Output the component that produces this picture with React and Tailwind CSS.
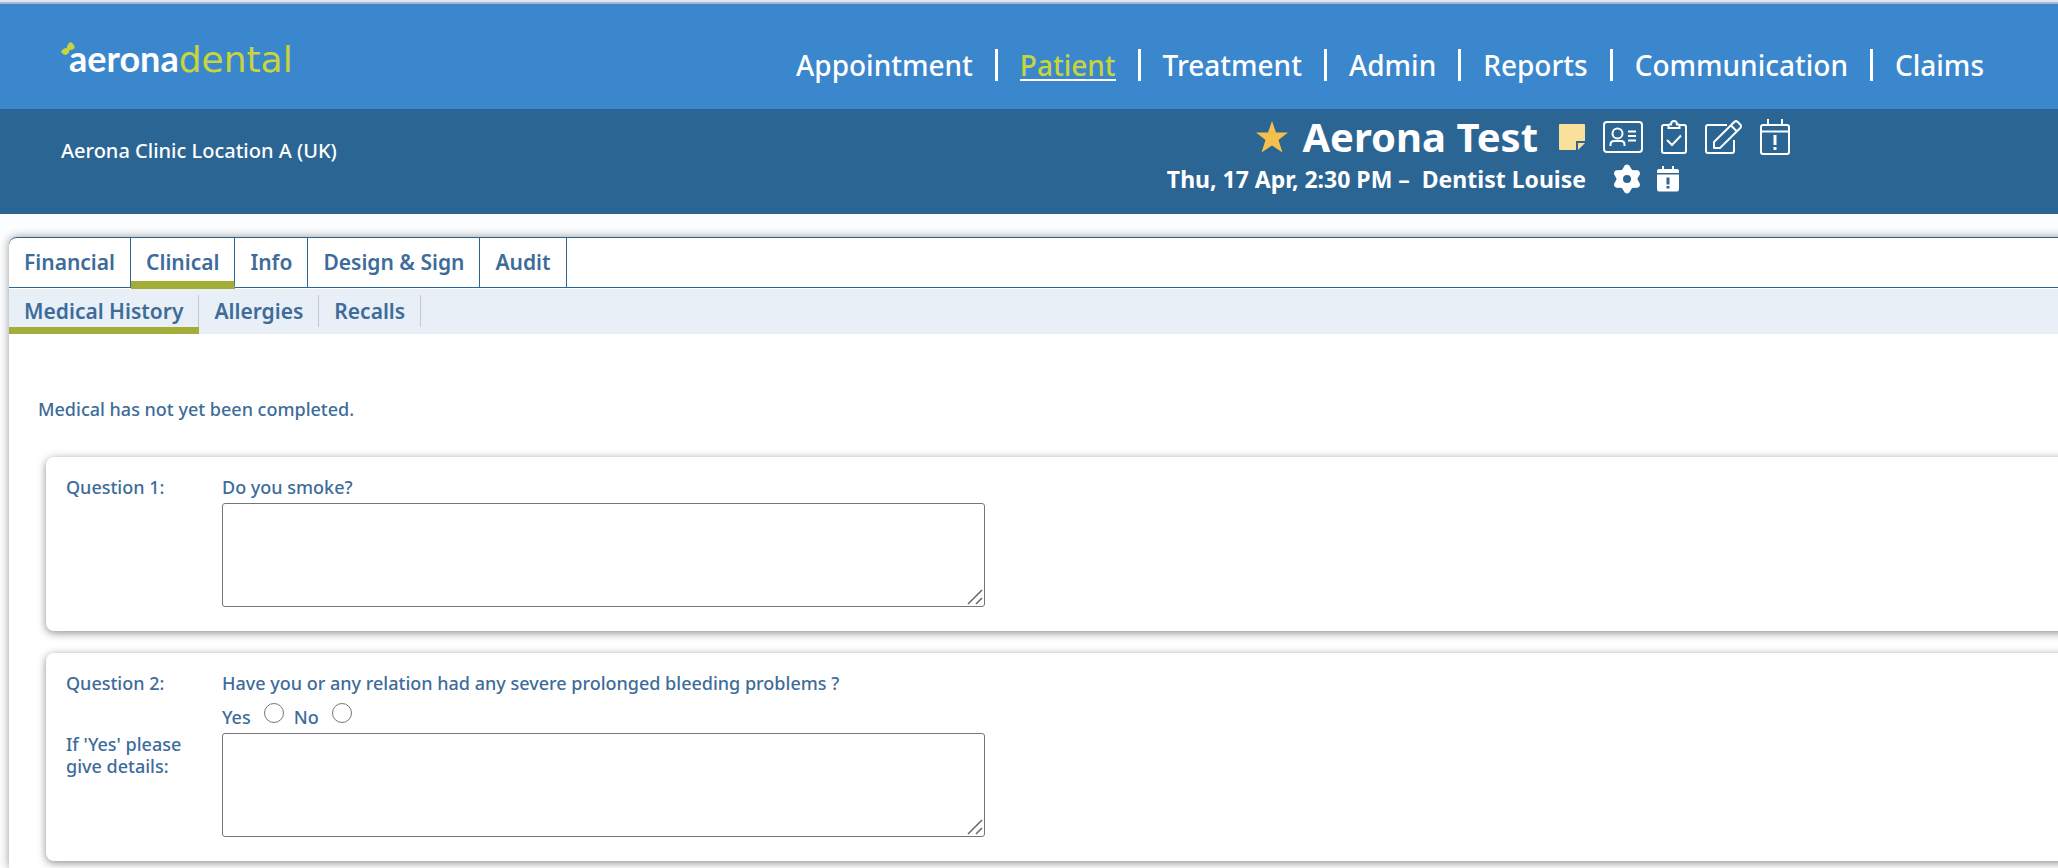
const navItems = ["Appointment", "Patient", "Treatment", "Admin", "Reports", "Communication", "Claims"];

const tabs = ["Financial", "Clinical", "Info", "Design & Sign", "Audit"];

const subTabs = ["Medical History", "Allergies", "Recalls"];

const Logo = () => (
    <a href="#" className="flex items-start leading-8">
        <svg width="14" height="14" viewBox="0 0 14 14" className="-mr-1.5" aria-hidden="true">
            <path fill="#c8d43c" d="M9.500 0C12.500 1.500 14 4 13.500 6C12.500 7.500 10.500 8 8.500 8C8.500 10.500 7 12.500 4.500 13C2.500 12.500.5 11 0 9.500C1.500 7 3.500 6 6 6C5.800 3.500 7.500 1 9.500 0Z" />
        </svg>
        <span className="flex items-baseline text-4xl">
            <span className="font-['Lato',sans-serif] leading-8 font-bold text-white">aerona</span>
            <span className="font-['DejaVu_Sans',sans-serif] leading-8 font-normal text-[#c8d43c]">dental</span>
        </span>
    </a>
);

const StarIcon = () => (
    <svg width="32" height="32" viewBox="0 0 32 32" aria-hidden="true">
        <path fill="#f4bf4a" d="M16 0L20 11.500H32L22.500 19L26.500 31.500L16 24.500L5.500 31.500L9.500 19L0 11.500H12Z" />
    </svg>
);

const NoteIcon = () => (
    <svg width="26" height="26" viewBox="0 0 26 26" aria-hidden="true">
        <path fill="#fae19b" d="M1 0H25Q26 0 26 1V17H17V26H1Q0 26 0 25V1Q0 0 1 0Z" />
        <path fill="#fae19b" d="M19 19H26L19 26Z" />
    </svg>
);

const IdCardIcon = () => (
    <svg width="40" height="32" viewBox="0 0 40 32" fill="none" stroke="white" strokeWidth="2" aria-hidden="true">
        <rect x="1" y="1" width="38" height="30" rx="3" />
        <circle cx="14.500" cy="12.500" r="5" />
        <path d="M7.500 25V23.500Q7.500 20 11 20H18Q21.500 20 21.500 23.500V25M25 10.500H33M25 15H33M25 19.500H33" />
    </svg>
);

const ClipboardIcon = () => (
    <svg width="26" height="34" viewBox="0 0 26 34" fill="none" stroke="white" strokeWidth="2" aria-hidden="true">
        <path d="M7 5H3Q1 5 1 7V31Q1 33 3 33H23Q25 33 25 31V7Q25 5 23 5H19" />
        <path d="M7.500 8V5.500Q7.500 4.500 8.500 4.500H10Q10 1 13 1T16 4.500H17.500Q18.500 4.500 18.500 5.500V8Z" />
        <path d="M6 20L11 25L20 15.500" />
    </svg>
);

const EditIcon = () => (
    <svg width="37" height="34" viewBox="0 0 37 34" fill="none" stroke="white" strokeWidth="2" strokeLinejoin="round" aria-hidden="true">
        <path d="M22 5H3Q1 5 1 7V31Q1 33 3 33H27Q29 33 29 31V20" />
        <path d="M9 28V22L29.500 1.800Q31 .5 32.500 1.800L35.500 4.800Q36.500 6.200 35.500 7.800L15 28Z M26 5.500L32 11.500" />
    </svg>
);

const CalendarIcon = () => (
    <svg width="30" height="36" viewBox="0 0 30 36" fill="none" stroke="white" strokeWidth="2" aria-hidden="true">
        <rect x="1" y="6" width="28" height="29" rx="2" />
        <path d="M8 0V6M22 0V6M1 12.500H29" />
        <path strokeWidth="3" d="M15 16V26M15 28V31" />
    </svg>
);

const GearIcon = () => (
    <svg width="30" height="30" viewBox="-15 -15 30 30" fill="white" aria-hidden="true">
        <circle r="7" fill="none" stroke="white" strokeWidth="6" />
        {[0, 60, 120, 180, 240, 300].map((angle) => (
            <path key={angle} transform={`rotate(${angle})`} d="M-6 -7.500L-2.300 -13.500Q0 -15.500 2.300 -13.500L6 -7.500Z" />
        ))}
    </svg>
);

const AlertIcon = () => (
    <svg width="22" height="26" viewBox="0 0 22 26" fill="white" aria-hidden="true">
        <path d="M5 0H7V3H15V0H17V3H20Q22 3 22 5V7H0V5Q0 3 2 3H5Z" />
        <path fillRule="evenodd" d="M0 8.500H22V23Q22 25.500 20 25.500H2Q0 25.500 0 23ZM9.500 11.500V18.500H12.500V11.500ZM9.500 20V22.500H12.500V20Z" />
    </svg>
);

const patientActions = [
    { label: "Notes", Icon: NoteIcon },
    { label: "Patient card", Icon: IdCardIcon },
    { label: "Checklist", Icon: ClipboardIcon },
    { label: "Edit", Icon: EditIcon },
    { label: "Calendar", Icon: CalendarIcon }
];

const AnswerBox = ({ id, label }) => (
    <div className="relative w-[763px] h-[104px]">
        <textarea
            id={id}
            aria-label={label}
            className="block w-full h-full resize-none rounded-[3px] border border-[#767676] bg-white p-1"
        />
        {/* Resize grip */}
        <svg width="16" height="16" viewBox="0 0 16 16" className="absolute right-0.5 bottom-0.5 pointer-events-none" aria-hidden="true">
            <path d="M1 15L15 1M9 15L15 9" stroke="#666" strokeWidth="1.500" />
        </svg>
    </div>
);

const Card = ({ children }) => (
    <section className="-mr-4 rounded-lg bg-white px-5 pt-4 pb-6 shadow-[0_2px_8px_rgba(0,0,0,0.45)]">
        {children}
    </section>
);

const App = () => {
    return (
        <div className="flex min-h-screen flex-col overflow-hidden bg-[#fcfdff] font-['Noto_Sans',sans-serif] text-lg font-medium text-[#3d6c9a]">
            <header className="text-white">
                <div className="h-1 border-b-2 border-[#a9b9c9] bg-[#dce8f5]" />
                <div className="flex h-[105px] justify-between bg-[#3b87ce] pl-[61px] pr-[74px]">
                    <div className="pt-[38px]">
                        <Logo />
                    </div>
                    <nav className="flex items-center pt-5 pb-1">
                        {navItems.map((item, index) => (
                            <div key={item} className="flex items-center">
                                {index > 0 && <span className="mx-[22px] h-8 w-[3px] bg-white" />}
                                <a
                                    href="#"
                                    className={
                                        item === "Patient"
                                            ? "mt-0.5 border-b-2 border-white text-[28px] leading-7 text-[#c8d43c]"
                                            : "mt-0.5 border-b-2 border-transparent text-[28px] leading-7"
                                    }
                                >
                                    {item}
                                </a>
                            </div>
                        ))}
                    </nav>
                </div>

                <div className="flex h-[105px] justify-between bg-[#2b6593] pl-[61px] pr-[268px]">
                    <p className="pt-7 text-xl leading-7">Aerona Clinic Location A (UK)</p>
                    <div className="flex flex-col items-end pt-2">
                        <div className="flex h-10 items-center">
                            <StarIcon />
                            <h1 className="ml-3.5 mr-[21px] text-[40px] leading-10 font-bold">Aerona Test</h1>
                            <div className="flex items-center gap-[18px]">
                                {patientActions.map(({ label, Icon }) => (
                                    <button key={label} type="button" aria-label={label}>
                                        <Icon />
                                    </button>
                                ))}
                            </div>
                        </div>
                        <div className="mr-[111px] flex h-11 items-center">
                            <p className="mr-[26px] text-[23px] leading-7 font-bold">Thu, 17 Apr, 2:30 PM – &nbsp;Dentist Louise</p>
                            <button type="button" aria-label="Settings" className="mr-[15px]">
                                <GearIcon />
                            </button>
                            <button type="button" aria-label="Alerts">
                                <AlertIcon />
                            </button>
                        </div>
                    </div>
                </div>
            </header>

            <main className="mt-[23px] ml-[9px] -mr-4 flex-1 rounded-tl-lg bg-white pb-1.5 shadow-[0_0_10px_rgba(0,0,0,0.4)]">
                <nav className="flex h-[51px] rounded-tl-lg border-y border-[#2b6593]">
                    {tabs.map((tab) => (
                        <a
                            key={tab}
                            href="#"
                            className={
                                tab === "Clinical"
                                    ? "-mb-0.5 border-r border-b-8 border-r-[#2b6593] border-b-[#a5ad39] px-[15px] pt-2.5 text-[21px] leading-7 font-semibold"
                                    : "border-r border-[#2b6593] px-[15px] pt-2.5 text-[21px] leading-7 font-semibold"
                            }
                        >
                            {tab}
                        </a>
                    ))}
                </nav>
                <nav className="mt-px flex h-[45px] bg-[#e8eff6]">
                    {subTabs.map((tab) => (
                        <a
                            key={tab}
                            href="#"
                            className={
                                tab === "Medical History"
                                    ? "border-b-[7px] border-[#a5ad39] pt-1.5 text-[21px] leading-8 font-semibold"
                                    : "pt-1.5 text-[21px] leading-8 font-semibold"
                            }
                        >
                            <span className="block border-r border-[#c8c8c8] px-[15px]">{tab}</span>
                        </a>
                    ))}
                </nav>

                <div className="pt-[61px] pl-[37px]">
                    <p className="-ml-2 leading-7">Medical has not yet been completed.</p>

                    <form className="mt-[34px] flex flex-col gap-[22px]">
                        <Card>
                            <div className="grid grid-cols-[156px_1fr]">
                                <label htmlFor="q1" className="leading-7">Question 1:</label>
                                <div>
                                    <p className="mb-0.5 leading-7">Do you smoke?</p>
                                    <AnswerBox id="q1" label="Do you smoke?" />
                                </div>
                            </div>
                        </Card>

                        <Card>
                            <div className="grid grid-cols-[156px_1fr]">
                                <p className="leading-7">Question 2:</p>
                                <p className="leading-7">Have you or any relation had any severe prolonged bleeding problems ?</p>
                                <div className="col-start-2 flex h-9 items-center">
                                    <label htmlFor="q2-yes" className="mr-[13px] pt-1 leading-7">Yes</label>
                                    <input id="q2-yes" type="radio" name="q2" className="mr-2.5 mb-1 size-5 appearance-none rounded-full border border-[#767676] bg-white checked:border-[6px]" />
                                    <label htmlFor="q2-no" className="mr-[13px] pt-1 leading-7">No</label>
                                    <input id="q2-no" type="radio" name="q2" className="mb-1 size-5 appearance-none rounded-full border border-[#767676] bg-white checked:border-[6px]" />
                                </div>
                                <label htmlFor="q2-details" className="leading-[22px]">
                                    If 'Yes' please
                                    <br />
                                    give details:
                                </label>
                                <AnswerBox id="q2-details" label="If 'Yes' please give details" />
                            </div>
                        </Card>
                    </form>
                </div>
            </main>
        </div>
    );
};

export default App;
